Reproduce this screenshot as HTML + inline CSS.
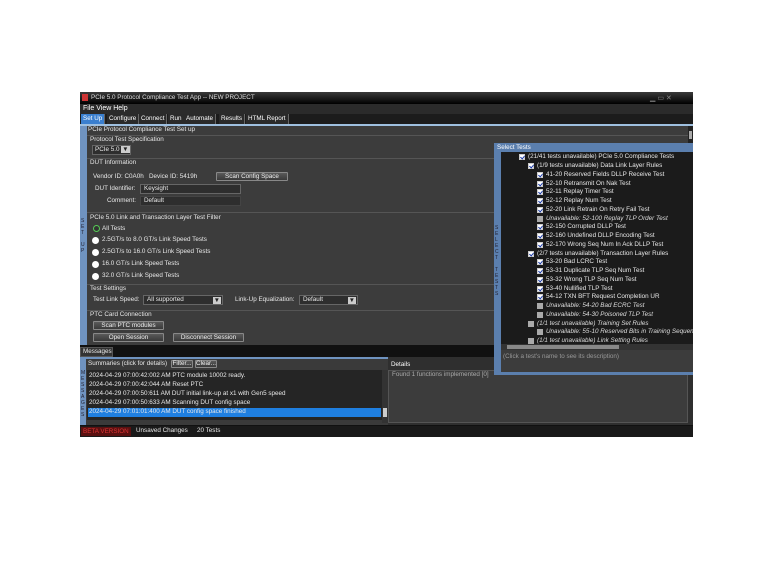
<!DOCTYPE html>
<html><head><meta charset="utf-8"><style>
*{margin:0;padding:0;box-sizing:border-box}
body{width:771px;height:581px;background:#fff;position:relative;overflow:hidden;font-family:"Liberation Sans",sans-serif;font-size:6.3px;color:#e8e8e8}
div{position:absolute;white-space:nowrap}
.t{line-height:8px}
.btn{background:linear-gradient(#5a5a5a,#3a3a3a);border:1px solid #888;color:#eee;text-align:center;line-height:7px;border-radius:1px}
.inp{background:#2e2e2e;border:1px solid #666;line-height:8px;padding-left:3px}
.sep{height:1px;background:#555}
.cb{width:6px;height:6px;background:#fff;border:1px solid #ccc}
.cb:after{content:"";position:absolute;left:1px;top:0px;width:2px;height:3px;border:solid #1a3aa8;border-width:0 1px 1px 0;transform:rotate(40deg)}
.cg{width:6px;height:6px;background:#aaa}
.rd{width:7px;height:7px;border-radius:50%;background:#fff}
.tab{top:114px;height:10px;line-height:10px;background:#2a2a2a;border-right:1px solid #666;padding:0 2px;color:#fff}
.it{font-style:italic;color:#ddd}
</style></head><body>
<!-- window -->
<div style="left:80px;top:92px;width:613px;height:345px;background:#111"></div>
<div style="left:80px;top:92px;width:613px;height:12px;background:linear-gradient(#3a3a3a,#000)"></div>
<div style="left:82px;top:94px;width:6px;height:7px;background:#c33"></div>
<div class="t" style="left:91px;top:94px;color:#ddd">PCIe 5.0 Protocol Compliance Test App -- NEW PROJECT</div>
<div style="left:650px;top:94px;width:40px;height:9px;color:#888;font-size:7px">▁ ▭ ✕</div>
<div style="left:80px;top:104px;width:613px;height:10px;background:#2b2b2b"></div>
<div class="t" style="left:83px;top:105px;font-size:7px;color:#fff">File View Help</div>
<div style="left:80px;top:114px;width:613px;height:11px;background:#1c1c1c"></div>
<div class="tab" style="left:81px;background:#3a7fcf">Set Up</div>
<div class="tab" style="left:107px">Configure</div>
<div class="tab" style="left:139px">Connect</div>
<div class="tab" style="left:168px">Run</div>
<div class="tab" style="left:184px">Automate</div>
<div class="tab" style="left:219px">Results</div>
<div class="tab" style="left:246px">HTML Report</div>
<div style="left:80px;top:124px;width:613px;height:2px;background:#9fc0e0"></div>
<!-- setup panel -->
<div style="left:80px;top:126px;width:608px;height:219px;background:#3c3c3c"></div>
<div style="left:80px;top:126px;width:7px;height:219px;background:#6f93c0"></div>
<div style="left:81px;top:218px;width:5px;font-size:5px;line-height:6px;color:#223;white-space:normal">S E T &nbsp; U P</div>
<div style="left:688px;top:126px;width:5px;height:219px;background:#222"></div>
<div style="left:689px;top:131px;width:3px;height:8px;background:#aaa"></div>
<div class="t" style="left:88px;top:126px">PCIe Protocol Compliance Test Set up</div>
<div class="sep" style="left:87px;top:135px;width:601px"></div>
<div class="t" style="left:90px;top:136px">Protocol Test Specification</div>
<div style="left:92px;top:145px;width:39px;height:10px;background:#2e2e2e;border:1px solid #666;line-height:8px;padding-left:2px">PCIe 5.0 <span style="background:#ccc;color:#222;padding:0 1px">▼</span></div>
<div class="sep" style="left:87px;top:158px;width:601px"></div>
<div class="t" style="left:90px;top:159px">DUT Information</div>
<div class="t" style="left:93px;top:173px">Vendor ID: C0A0h &nbsp; Device ID: 5419h</div>
<div class="btn" style="left:216px;top:172px;width:72px;height:9px">Scan Config Space</div>
<div class="t" style="left:95px;top:185px">DUT Identifier:</div>
<div class="inp" style="left:140px;top:184px;width:101px;height:10px">Keysight</div>
<div class="t" style="left:107px;top:197px">Comment:</div>
<div class="inp" style="left:140px;top:196px;width:101px;height:10px;border-color:#444">Default</div>
<div class="sep" style="left:87px;top:212px;width:601px"></div>
<div class="t" style="left:90px;top:214px">PCIe 5.0 Link and Transaction Layer Test Filter</div>
<div style="left:93px;top:225px;width:7px;height:7px;border-radius:50%;border:1.5px solid #5c5;background:#333"></div>
<div class="t" style="left:102px;top:225px">All Tests</div>
<div class="rd" style="left:92px;top:237px"></div><div class="t" style="left:102px;top:236px">2.5GT/s to 8.0 GT/s Link Speed Tests</div>
<div class="rd" style="left:92px;top:249px"></div><div class="t" style="left:102px;top:248px">2.5GT/s to 16.0 GT/s Link Speed Tests</div>
<div class="rd" style="left:92px;top:261px"></div><div class="t" style="left:102px;top:260px">16.0 GT/s Link Speed Tests</div>
<div class="rd" style="left:92px;top:273px"></div><div class="t" style="left:102px;top:272px">32.0 GT/s Link Speed Tests</div>
<div class="sep" style="left:87px;top:284px;width:601px"></div>
<div class="t" style="left:90px;top:285px">Test Settings</div>
<div class="t" style="left:93px;top:296px">Test Link Speed:</div>
<div class="inp" style="left:143px;top:295px;width:80px;height:10px">All supported<span style="position:absolute;right:1px;top:1px;background:#ccc;color:#222;line-height:7px;padding:0 1px">▼</span></div>
<div class="t" style="left:235px;top:296px">Link-Up Equalization:</div>
<div class="inp" style="left:299px;top:295px;width:59px;height:10px">Default<span style="position:absolute;right:1px;top:1px;background:#ccc;color:#222;line-height:7px;padding:0 1px">▼</span></div>
<div class="sep" style="left:87px;top:310px;width:601px"></div>
<div class="t" style="left:90px;top:311px">PTC Card Connection</div>
<div class="btn" style="left:93px;top:321px;width:71px;height:9px">Scan PTC modules</div>
<div class="btn" style="left:93px;top:333px;width:71px;height:9px">Open Session</div>
<div class="btn" style="left:173px;top:333px;width:71px;height:9px">Disconnect Session</div>
<!-- messages -->
<div style="left:80px;top:347px;width:33px;height:10px;background:#333;border:1px solid #555;line-height:8px;padding-left:2px">Messages</div>
<div style="left:80px;top:357px;width:308px;height:68px;background:#3a3a3a"></div>
<div style="left:80px;top:357px;width:308px;height:2px;background:#6f93c0"></div>
<div style="left:80px;top:359px;width:6px;height:66px;background:#6f93c0"></div>
<div style="left:81px;top:370px;width:4px;font-size:5px;line-height:6px;color:#223;white-space:normal">M E S S A G E S</div>
<div class="t" style="left:88px;top:360px">Summaries (click for details)</div>
<div class="btn" style="left:171px;top:360px;width:22px;height:8px;line-height:6px">Filter...</div>
<div class="btn" style="left:195px;top:360px;width:22px;height:8px;line-height:6px">Clear...</div>
<div style="left:87px;top:370px;width:295px;height:50px;background:#252525"></div>
<div class="t" style="left:89px;top:372px">2024-04-29 07:00:42:002 AM PTC module 10002 ready.</div>
<div class="t" style="left:89px;top:381px">2024-04-29 07:00:42:044 AM Reset PTC</div>
<div class="t" style="left:89px;top:390px">2024-04-29 07:00:50:611 AM DUT initial link-up at x1 with Gen5 speed</div>
<div class="t" style="left:89px;top:399px">2024-04-29 07:00:50:633 AM Scanning DUT config space</div>
<div style="left:88px;top:408px;width:293px;height:9px;background:#1f7fe0"></div>
<div class="t" style="left:89px;top:408px">2024-04-29 07:01:01:400 AM DUT config space finished</div>
<div style="left:382px;top:370px;width:6px;height:53px;background:#333"></div>
<div style="left:383px;top:408px;width:4px;height:9px;background:#ccc"></div>
<div style="left:388px;top:357px;width:305px;height:68px;background:#2f2f2f"></div>
<div class="t" style="left:391px;top:361px;color:#fff">Details</div>
<div style="left:388px;top:370px;width:300px;height:53px;background:#3c3c3c;border:1px solid #555"></div>
<div class="t" style="left:392px;top:371px;color:#aaa">Found 1 functions implemented [0]</div>
<!-- status -->
<div style="left:80px;top:426px;width:613px;height:11px;background:#1a1a1a"></div>
<div style="left:81px;top:427px;width:50px;height:9px;background:#5a1010;color:#d33;line-height:9px;padding-left:2px">BETA VERSION</div>
<div class="t" style="left:136px;top:427px">Unsaved Changes</div>
<div class="t" style="left:197px;top:427px">20 Tests</div>
<!-- select tests panel -->
<div style="left:494px;top:143px;width:199px;height:232px;background:#5b7fae"></div>
<div class="t" style="left:497px;top:144px;color:#fff">Select Tests</div>
<div style="left:495px;top:225px;width:5px;font-size:5px;line-height:6px;color:#223;white-space:normal">S E L E C T &nbsp; T E S T S</div>
<div style="left:501px;top:152px;width:192px;height:192px;background:#1b1b1b;overflow:hidden" id="tree">
<div style="left:18px;top:1px"><span class="cb" style="position:absolute;left:0;top:1px"></span><span style="margin-left:9px" class="t">(21/41 tests unavailable) PCIe 5.0 Compliance Tests</span></div>
<div style="left:27px;top:10px"><span class="cb" style="position:absolute;left:0;top:1px"></span><span style="margin-left:9px">(1/9 tests unavailable) Data Link Layer Rules</span></div>
<div style="left:36px;top:18.8px"><span class="cb" style="position:absolute;left:0;top:1px"></span><span style="margin-left:9px">41-20 Reserved Fields DLLP Receive Test</span></div>
<div style="left:36px;top:27.5px"><span class="cb" style="position:absolute;left:0;top:1px"></span><span style="margin-left:9px">52-10 Retransmit On Nak Test</span></div>
<div style="left:36px;top:36.3px"><span class="cb" style="position:absolute;left:0;top:1px"></span><span style="margin-left:9px">52-11 Replay Timer Test</span></div>
<div style="left:36px;top:45px"><span class="cb" style="position:absolute;left:0;top:1px"></span><span style="margin-left:9px">52-12 Replay Num Test</span></div>
<div style="left:36px;top:53.8px"><span class="cb" style="position:absolute;left:0;top:1px"></span><span style="margin-left:9px">52-20 Link Retrain On Retry Fail Test</span></div>
<div style="left:36px;top:62.5px"><span class="cg" style="position:absolute;left:0;top:1px"></span><span style="margin-left:9px" class="it">Unavailable: 52-100 Replay TLP Order Test</span></div>
<div style="left:36px;top:71.3px"><span class="cb" style="position:absolute;left:0;top:1px"></span><span style="margin-left:9px">52-150 Corrupted DLLP Test</span></div>
<div style="left:36px;top:80px"><span class="cb" style="position:absolute;left:0;top:1px"></span><span style="margin-left:9px">52-160 Undefined DLLP Encoding Test</span></div>
<div style="left:36px;top:88.8px"><span class="cb" style="position:absolute;left:0;top:1px"></span><span style="margin-left:9px">52-170 Wrong Seq Num In Ack DLLP Test</span></div>
<div style="left:27px;top:97.5px"><span class="cb" style="position:absolute;left:0;top:1px"></span><span style="margin-left:9px">(2/7 tests unavailable) Transaction Layer Rules</span></div>
<div style="left:36px;top:106.3px"><span class="cb" style="position:absolute;left:0;top:1px"></span><span style="margin-left:9px">53-20 Bad LCRC Test</span></div>
<div style="left:36px;top:115px"><span class="cb" style="position:absolute;left:0;top:1px"></span><span style="margin-left:9px">53-31 Duplicate TLP Seq Num Test</span></div>
<div style="left:36px;top:123.8px"><span class="cb" style="position:absolute;left:0;top:1px"></span><span style="margin-left:9px">53-32 Wrong TLP Seq Num Test</span></div>
<div style="left:36px;top:132.5px"><span class="cb" style="position:absolute;left:0;top:1px"></span><span style="margin-left:9px">53-40 Nullified TLP Test</span></div>
<div style="left:36px;top:141.3px"><span class="cb" style="position:absolute;left:0;top:1px"></span><span style="margin-left:9px">54-12 TXN BFT Request Completion UR</span></div>
<div style="left:36px;top:150px"><span class="cg" style="position:absolute;left:0;top:1px"></span><span style="margin-left:9px" class="it">Unavailable: 54-20 Bad ECRC Test</span></div>
<div style="left:36px;top:158.8px"><span class="cg" style="position:absolute;left:0;top:1px"></span><span style="margin-left:9px" class="it">Unavailable: 54-30 Poisoned TLP Test</span></div>
<div style="left:27px;top:167.5px"><span class="cg" style="position:absolute;left:0;top:1px"></span><span style="margin-left:9px" class="it">(1/1 test unavailable) Training Set Rules</span></div>
<div style="left:36px;top:176.3px"><span class="cg" style="position:absolute;left:0;top:1px"></span><span style="margin-left:9px" class="it">Unavailable: 55-10 Reserved Bits in Training Sequence</span></div>
<div style="left:27px;top:185px"><span class="cg" style="position:absolute;left:0;top:1px"></span><span style="margin-left:9px" class="it">(1/1 test unavailable) Link Setting Rules</span></div>
</div>
<div style="left:501px;top:344px;width:192px;height:6px;background:#333"></div>
<div style="left:507px;top:345px;width:112px;height:4px;background:#888"></div>
<div style="left:501px;top:350px;width:192px;height:22px;background:#3c3c3c"></div>
<div class="t" style="left:503px;top:353px;color:#999">(Click a test's name to see its description)</div>
</body></html>
